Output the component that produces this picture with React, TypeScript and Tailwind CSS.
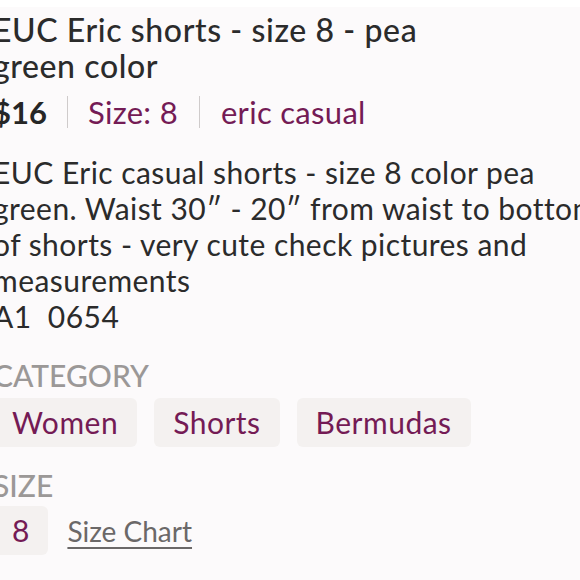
export default function App() {
  const categories = ["Women", "Shorts", "Bermudas"];

  return (
    <div
      className="w-[580px] h-[580px] overflow-hidden bg-white"
      style={{ fontFamily: "Lato, 'Open Sans', sans-serif" }}
    >
      <div className="mt-[7px] h-full bg-[#fcfafb]">
        <div className="ml-[-7px] pt-[5px] w-[600px]">
          {/* Title */}
          <h1 className="text-[32px] leading-[36px] font-medium tracking-[0.6px] text-[#2b2b2b] w-[450px]">
            EUC Eric shorts - size 8 - pea green color
          </h1>

          {/* Price / size / brand */}
          <div className="flex items-center mt-[10px] h-[36px] text-[31px]">
            <span className="font-bold text-[#262626]">$16</span>
            <span className="mx-[20px] h-[32px] w-px bg-[#cfcbcb]" />
            <span className="text-[#741b55] tracking-[0.3px]">Size: 8</span>
            <span className="mx-[21px] h-[32px] w-px bg-[#cfcbcb]" />
            <span className="text-[#741b55] tracking-[0.3px]">eric casual</span>
          </div>

          {/* Description */}
          <p className="mt-[24px] text-[30px] leading-[36px] tracking-[0.45px] text-[#2b2b2b] w-[620px]">
            EUC Eric casual shorts - size 8 color pea
            <br />
            green. Waist 30&#8243; - 20&#8243; from waist to bottom
            <br />
            of shorts - very cute check pictures and
            <br />
            measurements
            <br />
            A1&nbsp; 0654
          </p>

          {/* Category */}
          <div className="mt-[24px] text-[30px] leading-[34px] font-medium text-[#9b9897]">
            CATEGORY
          </div>
          <div className="flex gap-[17px] mt-[6px]">
            {categories.map((c) => (
              <span
                key={c}
                className="h-[49px] px-[19px] flex items-center rounded-[6px] bg-[#f4f1f0] text-[30px] tracking-[0.5px] text-[#741b55]"
              >
                {c}
              </span>
            ))}
          </div>

          {/* Size */}
          <div className="mt-[21px] text-[30px] leading-[34px] font-medium text-[#9b9897]">
            SIZE
          </div>
          <div className="flex items-center gap-[19px] mt-[4px]">
            <span className="h-[49px] px-[19px] flex items-center rounded-[6px] bg-[#f4f1f0] text-[30px] text-[#741b55]">
              8
            </span>
            <span className="text-[28px] text-[#6b6868] underline underline-offset-[5px] decoration-[#6b6868]">
              Size Chart
            </span>
          </div>
        </div>
      </div>
    </div>
  );
}
